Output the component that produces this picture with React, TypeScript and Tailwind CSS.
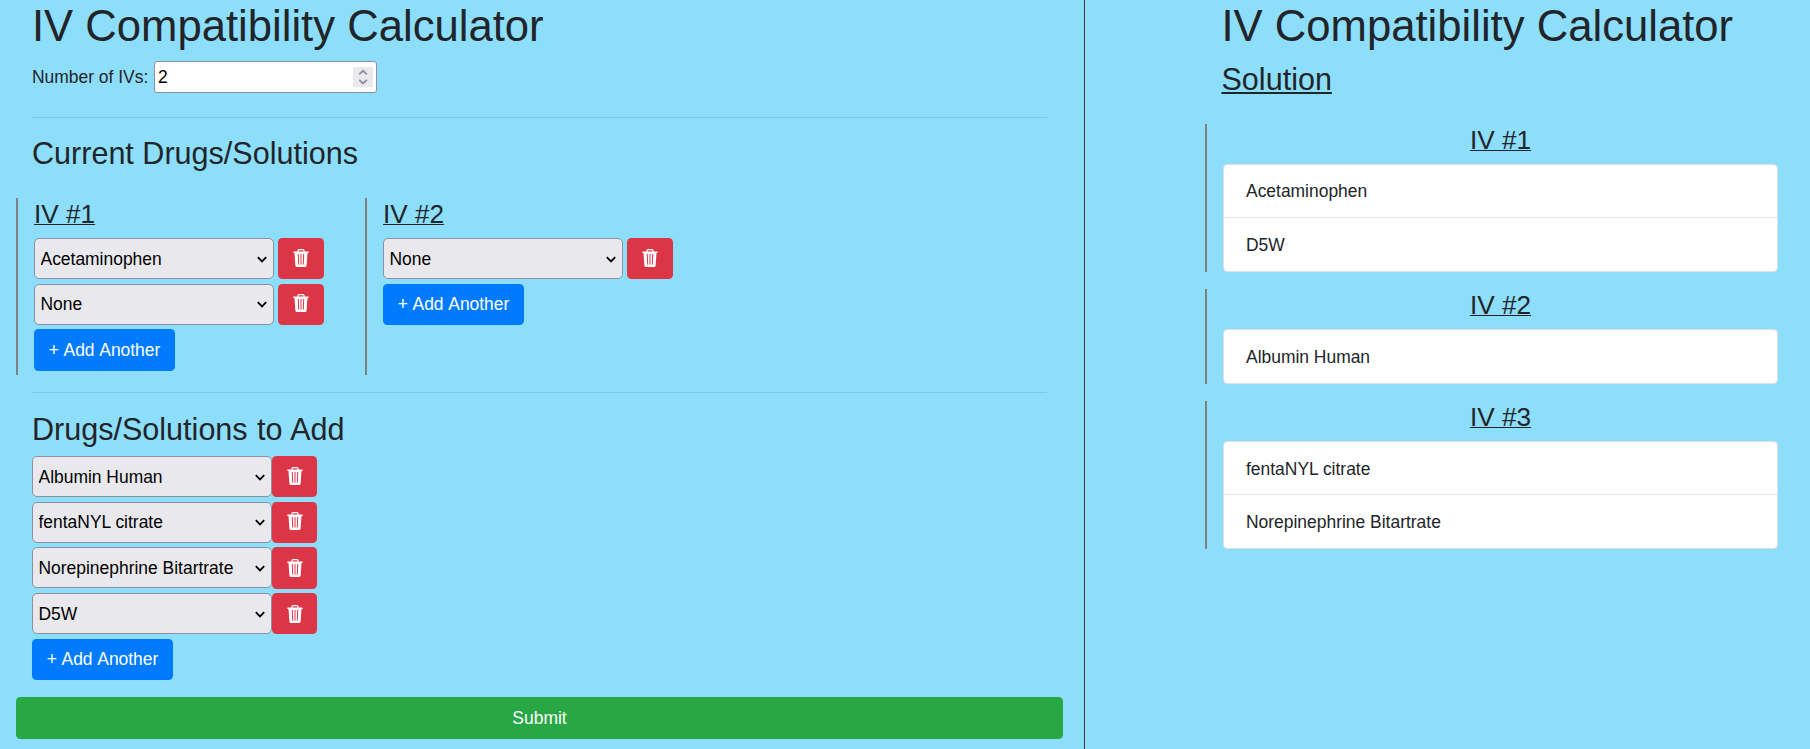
const DRUGS = ["None", "Acetaminophen", "Albumin Human", "D5W", "fentaNYL citrate", "Norepinephrine Bitartrate"];

function TrashIcon() {
  return (
    <svg viewBox="0 0 18 18" className="size-[18px]">
      <path d="M6 3V1.6Q6 .7 6.9.7h4.2q.9 0 .9.9V3" fill="none" stroke="currentColor" strokeWidth="1.2" />
      <path d="M1.8 2.5h14.4q.6 0 .6.75t-.6.75h-.7l-.9 12.5q-.1 1.5-1.5 1.5H4.9q-1.4 0-1.5-1.5L2.5 4h-.7q-.6 0-.6-.75t.6-.75Z" fill="currentColor" />
      <path d="M6.3 5.3l.4 9.9M9 5.3v9.9M11.7 5.3l-.4 9.9" stroke="#dc3545" strokeWidth="1" strokeLinecap="round" fill="none" />
    </svg>
  );
}

function DrugSelect({ value, lift }: { value: string; lift?: boolean }) {
  return (
    <div className="grid h-[41px] w-[240px] shrink-0">
      <select
        defaultValue={value}
        className={`col-start-1 row-start-1 h-[41px] w-[240px] appearance-none rounded-[5px] border border-[#8f8f9d] bg-[#e9e9ed] pl-[5.5px] pr-6 text-[17.45px] leading-[26px] text-black ${lift ? "pt-0" : "pt-px"}`}
      >
        {DRUGS.map((d) => (
          <option key={d}>{d}</option>
        ))}
      </select>
      <svg
        viewBox="0 0 10 7"
        className={`pointer-events-none col-start-1 row-start-1 mr-[7px] h-[7px] w-[10px] self-center justify-self-end ${lift ? "mt-0" : "mt-[2px]"}`}
        fill="none"
        stroke="#000"
        strokeWidth="1.8"
      >
        <path d="M0.8 1.2 5 5.4 9.2 1.2" />
      </svg>
    </div>
  );
}

function DrugRow({ value, gap, lift }: { value: string; gap?: boolean; lift?: boolean }) {
  return (
    <div className={`flex h-[45.7px] items-start ${gap ? "gap-1" : ""}`}>
      <DrugSelect value={value} lift={lift} />
      <button
        aria-label="Remove"
        className={`flex h-[41.4px] items-start justify-center rounded-[4.4px] bg-[#dc3545] text-white ${gap ? "w-[46px]" : "w-[45px]"} ${lift ? "pt-[10.8px]" : "pt-[11.5px]"}`}
      >
        <TrashIcon />
      </button>
    </div>
  );
}

function AddButton() {
  return (
    <div className="h-[45.7px]">
      <button className="h-[41.4px] w-[141px] whitespace-nowrap rounded-[4.4px] bg-[#007bff] text-center text-[17.45px] leading-[26.2px] text-white [word-spacing:0.8px]">
        + Add Another
      </button>
    </div>
  );
}

function CurrentIV({ title, drugs }: { title: string; drugs: string[] }) {
  return (
    <section className="w-[349px] border-l-2 border-[#808080] pl-4">
      <h4 className="mb-[7.2px] pt-px text-[26.18px] leading-[31.7px] underline decoration-1 underline-offset-[1px]">{title}</h4>
      {drugs.map((d, i) => (
        <DrugRow key={i} value={d} gap lift={i === 1} />
      ))}
      <AddButton />
    </section>
  );
}

function SolutionIV({ title, drugs }: { title: string; drugs: string[] }) {
  return (
    <section className="mb-[17px] border-l-2 border-[#808080] pl-4">
      <h4 className="h-10 pt-px text-center text-[26.18px] leading-[31.7px] underline decoration-1 underline-offset-[1px]">{title}</h4>
      <ul className="divide-y divide-[#dfdfdf] rounded-[4.4px] border border-[#dfdfdf] bg-white">
        {drugs.map((d) => (
          <li
            key={d}
            className={`h-[53px] pl-[22px] ${d === "Acetaminophen" ? "leading-[53px]" : "leading-[55px]"}`}
          >
            {d}
          </li>
        ))}
      </ul>
    </section>
  );
}

export default function App() {
  return (
    <div className="flex h-[749px] w-[1810px] overflow-hidden bg-[#8ddefb] font-['Liberation_Sans',Arial,sans-serif] text-[17.45px] leading-[26.2px] text-[#212529]">
      <main className="w-[1085px] shrink-0 border-r border-[#343a40] pl-4 pr-[21px]">
        <div className="px-4">
          <h1 className="mb-[8.2px] text-[43.64px] leading-[52.8px]">IV Compatibility Calculator</h1>
          <div className="flex h-[32px] items-center">
            <label htmlFor="ivs" className="w-[122px] whitespace-nowrap">
              Number of IVs:
            </label>
            <div className="flex h-8 w-[223px] items-center justify-between rounded-[3px] border border-[#8f8f9d] bg-white pl-[3px] pr-[3px]">
              <input id="ivs" defaultValue="2" className="h-[28px] w-[190px] pt-px text-black outline-none" />
              <span className="flex h-5 w-5 items-center justify-center bg-[#e9e9ed]">
                <svg viewBox="0 0 10 16" className="h-4 w-[10px]" fill="none" stroke="#8f8f9d" strokeWidth="1.8">
                  <path d="M1.2 5.4 5 1.8 8.8 5.4M1.2 10.8 5 14.4 8.8 10.8" />
                </svg>
              </span>
            </div>
          </div>
          <hr className="mt-6 border-t border-[#7ec8e3]" />
          <h3 className="mt-[17px] text-[30.55px] leading-[37px]">Current Drugs/Solutions</h3>
        </div>
        <div className="mt-[26px] flex">
          <CurrentIV title="IV #1" drugs={["Acetaminophen", "None"]} />
          <CurrentIV title="IV #2" drugs={["None"]} />
        </div>
        <div className="px-4">
          <hr className="mt-[17px] border-t border-[#7ec8e3]" />
          <h3 className="mb-[8px] mt-[18px] text-[30.55px] leading-[37px] [word-spacing:0.9px]">Drugs/Solutions to Add</h3>
          {["Albumin Human", "fentaNYL citrate", "Norepinephrine Bitartrate", "D5W"].map((d, i) => (
            <DrugRow key={d} value={d} lift={i === 1} />
          ))}
          <AddButton />
        </div>
        <button className="mt-[12.6px] h-[42px] w-[1047px] rounded-[4.4px] bg-[#28a745] text-white">Submit</button>
      </main>
      <aside className="ml-[120px] w-[573px]">
        <div className="pl-[16.5px]">
          <h1 className="mb-[7.8px] text-[43.64px] leading-[52.8px]">IV Compatibility Calculator</h1>
          <h3 className="mb-[26.4px] text-[30.55px] leading-[37px] underline decoration-2 underline-offset-[2px]">Solution</h3>
        </div>
        <SolutionIV title="IV #1" drugs={["Acetaminophen", "D5W"]} />
        <SolutionIV title="IV #2" drugs={["Albumin Human"]} />
        <SolutionIV title="IV #3" drugs={["fentaNYL citrate", "Norepinephrine Bitartrate"]} />
      </aside>
    </div>
  );
}
